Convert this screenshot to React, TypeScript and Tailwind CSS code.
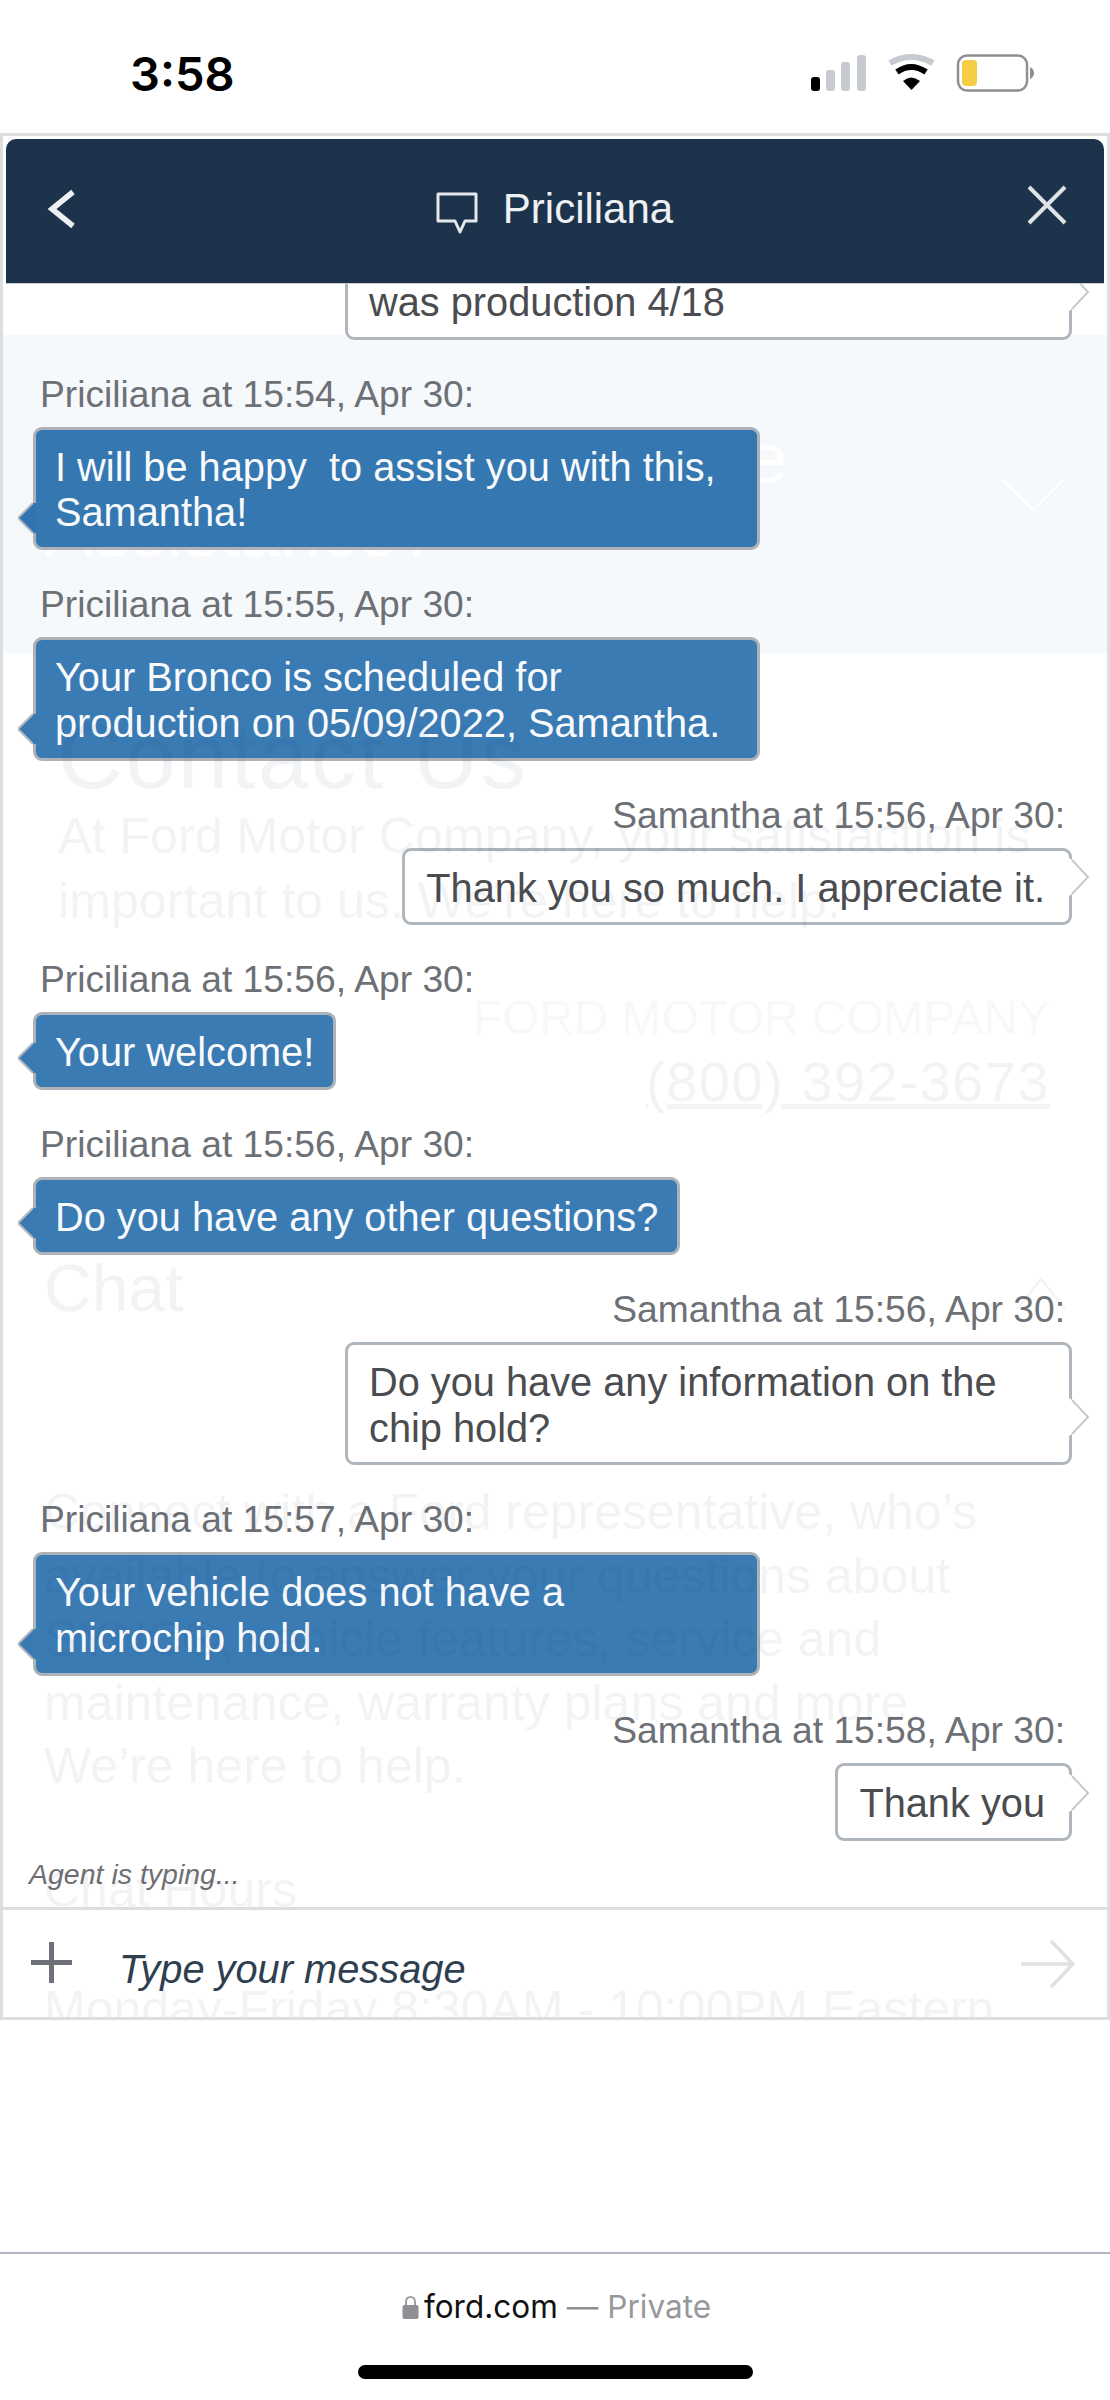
type Message = {
  who: string;
  time: string;
  text: string;
  mine?: boolean;
  wide?: boolean;
  band?: boolean;
};

const messages: Message[] = [
  { who: "Priciliana", time: "15:54", text: "I will be happy  to assist you with this,\nSamantha!", wide: true, band: true },
  { who: "Priciliana", time: "15:55", text: "Your Bronco is scheduled for\nproduction on 05/09/2022, Samantha.", wide: true },
  { who: "Samantha", time: "15:56", text: "Thank you so much. I appreciate it.", mine: true },
  { who: "Priciliana", time: "15:56", text: "Your welcome!" },
  { who: "Priciliana", time: "15:56", text: "Do you have any other questions?" },
  { who: "Samantha", time: "15:56", text: "Do you have any information on the\nchip hold?", mine: true, wide: true },
  { who: "Priciliana", time: "15:57", text: "Your vehicle does not have a\nmicrochip hold.", wide: true },
  { who: "Samantha", time: "15:58", text: "Thank you", mine: true },
];

function StatusIcons() {
  return (
    <svg width="224" height="38" viewBox="0 0 224 38" className="block">
      <rect x="0" y="23" width="9" height="14" rx="3" fill="#000" />
      <rect x="15" y="16" width="9" height="21" rx="3" fill="#c7cbd1" />
      <rect x="30" y="8" width="9" height="29" rx="3" fill="#c7cbd1" />
      <rect x="46" y="1" width="9" height="36" rx="3" fill="#c7cbd1" />
      <path d="M79 9 Q100 -3 122 9" fill="none" stroke="#c7cbd1" strokeWidth="6" />
      <path d="M86 18 Q100 8 115 18" fill="none" stroke="#000" strokeWidth="6" />
      <path d="M92 27 Q100 20 109 27 L100.500 36 Z" fill="#000" />
      <rect x="147" y="1.500" width="69" height="35" rx="9" fill="#fff" stroke="#8e8e93" strokeWidth="2.500" />
      <rect x="151" y="6" width="15" height="26" rx="4" fill="#f8cd46" />
      <path d="M219 13 Q223 15 223 19 Q223 23 219 25 Z" fill="#8e8e93" />
    </svg>
  );
}

function SentTip() {
  return (
    <svg width="21" height="38" viewBox="0 0 21 38" className="absolute bottom-[26px] right-[-21px]">
      <path d="M0 0 L3 2 L19 19 L3 36 L0 38 Z" fill="#fff" />
      <path d="M3 2 L19 19 L3 36" fill="none" stroke="#c5cad0" strokeWidth="2" />
    </svg>
  );
}

function MessageBody({ m }: { m: Message }) {
  if (m.mine) {
    return (
      <div className={`relative rounded-[9px] border-[3px] border-[#b0b6be] bg-white pb-[11px] pl-[21px] pr-[24px] pt-[15px] text-[39.75px] leading-[45.75px] text-[#4a4c50] whitespace-pre-wrap ${m.wide ? "w-[727px]" : ""}`}>
        {m.text}
        <SentTip />
      </div>
    );
  }
  return (
    <div className={`relative rounded-[9px] border-[3px] border-[#adb2b8] pb-[11px] pl-[19px] pr-[19px] pt-[15px] text-[39.75px] leading-[45.75px] text-[#f8fafc] whitespace-pre-wrap ${m.wide ? "w-[727px]" : ""} ${m.band ? "bg-[#2a70ad]/95" : "bg-[#2f74b0]/95"}`}>
      {m.text}
      <svg width="18" height="32" viewBox="0 0 18 32" className="absolute bottom-[13px] left-[-18px]">
        <path d="M0 16 L15 1 L18 1 L18 31 L15 31 Z" fill={m.band ? "#3174b0" : "#397ab3"} />
        <path d="M15 1 L0 16 L15 31" fill="none" stroke="#b4b8be" strokeWidth="2" />
      </svg>
    </div>
  );
}

function Bubble({ m }: { m: Message }) {
  return (
    <div className={m.mine ? "flex flex-col items-end pr-[35px] mb-[34px]" : "flex flex-col items-start pl-[30px] mb-[34px]"}>
      <div className="mx-[7px] mb-[13px] text-[37.2px] leading-[40px] text-[#6d7075] whitespace-nowrap">
        {m.who} at {m.time}, Apr 30:
      </div>
      <MessageBody m={m} />
    </div>
  );
}

export default function App() {
  return (
    <div className="w-[1110px] h-[2400px] bg-white overflow-hidden font-['Liberation_Sans',Arial,sans-serif]">
      <div className="flex h-[133px] items-center justify-between pt-[13px] pl-[130px] pr-[75px]">
        <div className="font-['Inter',sans-serif] text-[47px] font-semibold leading-none text-black">3:58</div>
        <StatusIcons />
      </div>

      {/* chat window sits on top of the faded ford.com page */}
      <div className="relative flex h-[1887px] flex-col overflow-hidden border-[3px] border-[#dcdee0]">
        {/* page behind: the dark roadside band, shows as pale tint */}
        <div className="absolute left-0 right-0 top-[199px] h-[318px] bg-[#f5f9fc] pl-[42px] pt-[86px] text-[73px] leading-[73px] text-white">
          <div className="whitespace-nowrap">Do you need Roadside</div>
          <div>Assistance?</div>
          <svg width="66" height="36" viewBox="0 0 66 36" className="absolute right-[41px] top-[142px]">
            <path d="M2 2 L33 33 L64 2" fill="none" stroke="#fff" strokeWidth="2.500" />
          </svg>
        </div>

        <div className="relative z-30 mx-[3px] mt-[3px] flex h-[145px] shrink-0 items-center rounded-t-[10px] border-b border-[#c9ced4] bg-[#1d334b] pl-[41px] pr-[37px] text-[#eef1f4]">
          <svg width="30" height="40" viewBox="0 0 30 40" className="-mt-1 shrink-0">
            <path d="M26 3 L5 20 L26 37" fill="none" stroke="#eef1f4" strokeWidth="5.500" />
          </svg>
          <div className="flex flex-1 items-center justify-center gap-6 pl-1">
            <svg width="44" height="44" viewBox="0 0 44 44" className="mt-1">
              <path d="M3 3 H41 V30 H30 L25 41 L20 30 H3 Z" fill="none" stroke="#e6e9ec" strokeWidth="3" strokeLinejoin="round" />
            </svg>
            <span className="-mt-1 text-[42px] leading-none">Priciliana</span>
          </div>
          <svg width="40" height="40" viewBox="0 0 40 40" className="-mt-3 shrink-0">
            <path d="M2 2 L38 38 M38 2 L2 38" fill="none" stroke="#dfe3e6" strokeWidth="4" />
          </svg>
        </div>

        <div className="relative z-10 min-h-0 flex-1 overflow-hidden">
          <div className="-mt-[68px] mb-[34px] flex flex-col items-end pr-[35px]">
            <div className="relative w-[727px] rounded-[9px] border-[3px] border-[#b0b6be] bg-white pb-[11px] pl-[21px] pr-[24px] pt-[15px] text-[39.75px] leading-[45.75px] text-[#4a4c50]">
              <div>&nbsp;</div>
              <div>was production 4/18</div>
              <SentTip />
            </div>
          </div>
          {messages.map((m, i) => (
            <Bubble key={i} m={m} />
          ))}
        </div>

        <div className="relative z-10 pb-4 pl-[26px] text-[28.5px] italic leading-[34px] text-[#6f7074]">Agent is typing...</div>

        <div className="relative z-10 flex h-[110px] shrink-0 items-center border-t-[3px] border-[#dcdee0] pl-[28px] pr-[32px]">
          <svg width="41" height="41" viewBox="0 0 41 41" className="mt-[-2px] shrink-0">
            <path d="M20.500 0 V41 M0 20.500 H41" stroke="#6e7278" strokeWidth="5" />
          </svg>
          <div className="ml-[47px] flex-1 pt-3 text-[39.8px] italic leading-none text-[#2f3f50]">Type your message</div>
          <svg width="54" height="50" viewBox="0 0 54 50" className="shrink-0">
            <path d="M0 25 H52 M30 2 L52 25 L30 48" fill="none" stroke="#dfe1e3" strokeWidth="3.500" />
          </svg>
        </div>

        {/* the page text, very faint and over everything */}
        <div className="pointer-events-none absolute inset-0 z-20 overflow-hidden text-[#102b4e]/[0.055]">
          <div className="pl-[55px] pt-[582px]">
            <div className="text-[90px] leading-[78px] tracking-[2.5px]">Contact Us</div>
            <div className="mt-2 text-[50.2px] leading-[65px] whitespace-nowrap">
              At Ford Motor Company, your satisfaction is
              <br />
              important to us. We’re here to help.
            </div>
          </div>
          <div className="mt-[54px] pr-[57px] text-right">
            <div className="text-[47.8px] leading-[60px]">FORD MOTOR COMPANY</div>
            <div className="text-[56px] leading-[68px] tracking-[1.5px] underline">(800) 392-3673</div>
          </div>
          <div className="mt-[132px] pl-[41px] text-[66px] leading-[80px]">Chat</div>
          <svg width="52" height="36" viewBox="0 0 52 36" className="absolute left-[1012px] top-[1139px]">
            <path d="M2 34 L26 4 L50 34" fill="none" stroke="currentColor" strokeWidth="2.500" />
          </svg>
          <div className="mt-[153px] pl-[41px] text-[50px] leading-[63.5px] whitespace-nowrap">
            Connect with a Ford representative, who’s
            <br />
            available to answer your questions about
            <br />
            SYNC®, vehicle features, service and
            <br />
            maintenance, warranty plans and more.
            <br />
            We’re here to help.
          </div>
          <div className="mt-[61px] pl-[41px] text-[50px] leading-[60px]">Chat Hours</div>
          <div className="mt-[59px] pl-[41px] text-[50px] leading-[60px] whitespace-nowrap">Monday-Friday 8:30AM - 10:00PM Eastern</div>
        </div>
      </div>

      <div className="mt-[232px] flex flex-col items-center border-t-2 border-[#b0b7c2] pt-[33px]">
        <div className="flex h-[40px] items-center pl-[3px] font-['Inter',sans-serif] text-[31.5px] leading-none">
          <svg width="17" height="24" viewBox="0 0 17 24" className="mr-[5px]">
            <path d="M4 11 V7 Q4 2 8.500 2 Q13 2 13 7 V11" fill="none" stroke="#a0a0a4" strokeWidth="2" />
            <rect x="0.500" y="10" width="16" height="14" rx="2" fill="#8e8e93" />
          </svg>
          <span className="text-[#111]">ford.com</span>
          <span className="ml-[9px] text-[#8e8e93]">—</span>
          <span className="ml-[9px] text-[#96989c]">Private</span>
        </div>
        <div className="mt-[38px] h-[14px] w-[395px] rounded-full bg-black" />
      </div>
    </div>
  );
}
